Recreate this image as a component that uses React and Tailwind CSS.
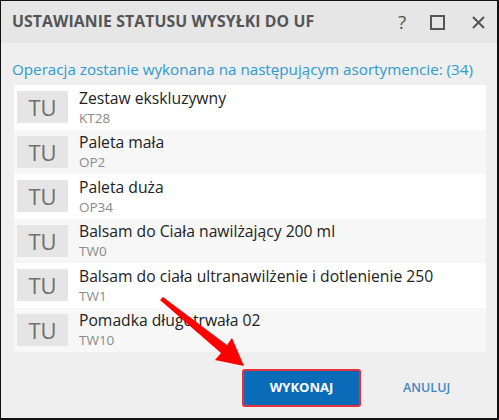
import React from 'react';

const items = [
  { name: 'Zestaw ekskluzywny', code: 'KT28' },
  { name: 'Paleta mała', code: 'OP2' },
  { name: 'Paleta duża', code: 'OP34' },
  { name: 'Balsam do Ciała nawilżający 200 ml', code: 'TW0' },
  { name: 'Balsam do ciała ultranawilżenie i dotlenienie 250', code: 'TW1' },
  { name: 'Pomadka długotrwała 02', code: 'TW10' },
];

function Arrow() {
  return (
    <svg className="absolute left-0 top-0 pointer-events-none" width="499" height="420" viewBox="0 0 499 420">
      <polygon points="159,299 162,296 226,344 231,337 243,365 214,359 220,352" fill="#ff0000" />
    </svg>
  );
}

export default function App() {
  return (
    <div
      className="relative w-[499px] h-[420px] overflow-hidden bg-[#efefef] border-t border-l border-r-2 border-b-2 border-[#111] flex flex-col"
      style={{ fontFamily: '"Open Sans", "Noto Sans", sans-serif' }}
    >
      {/* title bar */}
      <div className="h-[42px] shrink-0 bg-[#e6e6e6] flex items-center pl-[11px] pr-[12px]">
        <div className="flex-1 text-[15.8px] font-bold text-[#555] tracking-[0.1px]">USTAWIANIE STATUSU WYSYŁKI DO UF</div>
        <div className="flex items-center">
          <span className="text-[19px] text-[#555] w-[14px] text-center mr-[21px]">?</span>
          <span className="w-[15px] h-[15px] border-2 border-[#555] mr-[27px]"></span>
          <svg width="13" height="13" viewBox="0 0 13 13">
            <path d="M1 1 L12 12 M12 1 L1 12" stroke="#555" strokeWidth="2" />
          </svg>
        </div>
      </div>

      {/* body */}
      <div className="pl-[11px] pt-[16px] text-[15.2px] text-[#2e9ad0] leading-[20px]">
        Operacja zostanie wykonana na następującym asortymencie: (34)
      </div>

      <div className="mt-[6px] ml-[13px] w-[472px] flex flex-col">
        {items.map((it, i) => (
          <div
            key={it.code}
            className={`h-[44.5px] flex items-center pl-[3px] ${i % 2 === 0 ? 'bg-white' : 'bg-[#f7f7f7]'}`}
          >
            <div className="w-[51px] h-[32px] bg-[#e5e5e5] flex items-center justify-center text-[22px] text-[#707070] leading-none">
              TU
            </div>
            <div className="ml-[11px] flex flex-col -mt-[1px]">
              <span className="text-[15.7px] text-[#222] leading-[22px]">{it.name}</span>
              <span className="text-[13.5px] text-[#8a8a8a] leading-[18px]">{it.code}</span>
            </div>
          </div>
        ))}
      </div>

      {/* footer */}
      <div className="flex items-center mt-[17px] pl-[241px]">
        <button className="w-[119px] h-[38px] bg-[#0a6cb9] border-2 border-[#e8303a] rounded-[3px] text-white text-[13px] font-bold">
          WYKONAJ
        </button>
        <span className="ml-[42px] text-[12.5px] text-[#3e86c0] font-semibold">ANULUJ</span>
      </div>

      <Arrow />
    </div>
  );
}
